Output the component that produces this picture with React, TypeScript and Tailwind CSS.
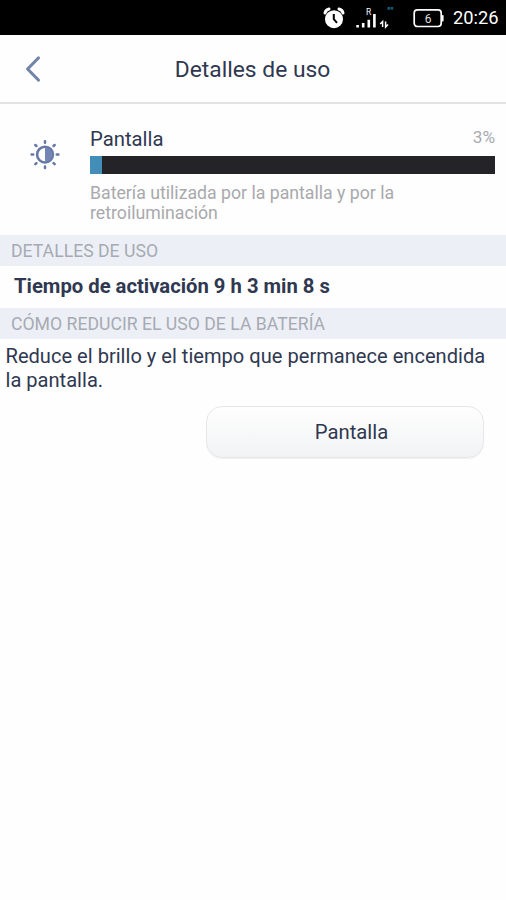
import type { ReactNode } from 'react';

const BATTERY_SHARE = 3;

const AlarmIcon = () => (
  <svg width="22" height="22" viewBox="0 0 22 22" fill="none">
    <circle cx="11" cy="12.2" r="9" fill="#fff" />
    <path d="M2 6C2.4 3.9 3.9 2.4 6 2M16 2c2.1.4 3.6 1.9 4 4" stroke="#fff" strokeWidth="3" strokeLinecap="round" />
    <path d="M10.8 7v5.2l3.2 3.6" stroke="#000" strokeWidth="2" />
  </svg>
);

const SignalIcon = () => (
  <svg width="40" height="24" viewBox="0 0 40 24" fill="none">
    <path d="M2.6 19v2.6M8.2 17v4.6M13.8 13.8v7.8M19.4 8v13.6" stroke="#fff" strokeWidth="2.6" />
    <text x="11" y="8.6" fontSize="8.5" fill="#fff" className="font-[Roboto,sans-serif]">R</text>
    <path d="M27.6 21v-5.4l-2.4 2.4M30.6 15.6V21l2.4-2.6" stroke="#fff" strokeWidth="1.5" />
    <path d="M32.4 2.4h6.2" stroke="#0e5a72" strokeWidth="2.6" strokeDasharray="2.6 .6" />
  </svg>
);

const BatteryIcon = ({ level }: { level: number }) => (
  <svg width="32" height="20" viewBox="0 0 32 20" fill="none">
    <rect x="1.2" y="1.9" width="27" height="16.6" rx="3.2" stroke="#fff" strokeWidth="1.7" />
    <path d="M29.6 8v4.6" stroke="#fff" strokeWidth="2" strokeLinecap="round" />
    <text x="15.2" y="14.6" fontSize="12" textAnchor="middle" fill="#ddd" className="font-[Roboto,sans-serif]">{level}</text>
  </svg>
);

const BackIcon = () => (
  <svg width="16" height="28" viewBox="0 0 16 28" fill="none">
    <path d="M13.4 3 2.6 14l10.8 11" stroke="#7284a8" strokeWidth="3.2" strokeLinecap="round" strokeLinejoin="round" />
  </svg>
);

const BrightnessIcon = () => (
  <svg width="30" height="30" viewBox="0 0 30 30" fill="none" stroke="#6678a5">
    <circle cx="15" cy="14.6" r="7.9" strokeWidth="2.6" />
    <path d="M15 7.6v14a7 7 0 0 0 0-14Z" fill="#7285b3" stroke="none" />
    <path
      d="M15 1.2v1.6M15 26.4V28M1.6 14.6h1.6M26.8 14.6h1.6M5.4 5l1 1M23.6 23.2l1 1M5.4 24.2l1-1M23.6 6l1-1"
      strokeWidth="2.5"
      strokeLinecap="round"
    />
  </svg>
);

const SectionHeader = ({ children }: { children: ReactNode }) => (
  <h2 className="flex h-[31px] items-center bg-[#ecf0f6] pt-px pl-[11px] text-[17.65px] text-[#a7aab2]">{children}</h2>
);

export default function App() {
  return (
    <div className="flex min-h-[900px] w-[506px] flex-col bg-[#fefefe] font-[Roboto,sans-serif] text-[#2f3850]">
      <div className="flex h-[35px] items-center justify-end bg-black pr-2 text-white">
        <AlarmIcon />
        <div className="mr-[18px] ml-[10px]">
          <SignalIcon />
        </div>
        <BatteryIcon level={6} />
        <span className="ml-2 w-[45px] pt-px text-[18.3px]">20:26</span>
      </div>

      <header className="grid h-[69px] grid-cols-[60px_1fr_60px] items-center border-b-2 border-[#e1e2e4]">
        <button type="button" aria-label="Atrás" className="pl-[25px]">
          <BackIcon />
        </button>
        <h1 className="pt-[3px] pr-px text-center text-[22.8px]">Detalles de uso</h1>
      </header>

      <section className="flex h-[131px] pt-[21px] pr-[11px] pl-[30px]">
        <div className="pt-[15px]">
          <BrightnessIcon />
        </div>
        <div className="ml-[30px] flex-1">
          <div className="flex h-[31px] items-start justify-between text-[20.3px] leading-[28px]">
            <span>Pantalla</span>
            <span className="text-[17.2px] leading-[25px] text-[#a7aab2]">{BATTERY_SHARE}%</span>
          </div>
          <div className="h-[18px] bg-[#242428]">
            <div className="h-full bg-[#438eb9]" style={{ width: `${BATTERY_SHARE}%` }} />
          </div>
          <p className="mt-[9px] text-[17.7px] leading-5 text-[#a9a9ad]">
            Batería utilizada por la pantalla y por la
            <br />
            retroiluminación
          </p>
        </div>
      </section>

      <SectionHeader>DETALLES DE USO</SectionHeader>
      <p className="flex h-[42px] items-center pb-0.5 pl-[14px] text-[20.25px] font-bold">Tiempo de activación 9 h 3 min 8 s</p>
      <SectionHeader>CÓMO REDUCIR EL USO DE LA BATERÍA</SectionHeader>
      <p className="pt-[5px] pl-[5.5px] text-[20.1px] leading-6">
        Reduce el brillo y el tiempo que permanece encendida
        <br />
        la pantalla.
      </p>
      <button
        type="button"
        className="mt-[14px] ml-[206px] h-[52px] w-[278px] rounded-2xl border border-[#e6e7e9] bg-linear-to-b from-[#fefefe] to-[#f2f3f5] pt-px pl-[13px] text-[20.3px] shadow-[0_1px_1px_rgba(0,0,0,0.06)]"
      >
        Pantalla
      </button>
    </div>
  );
}
